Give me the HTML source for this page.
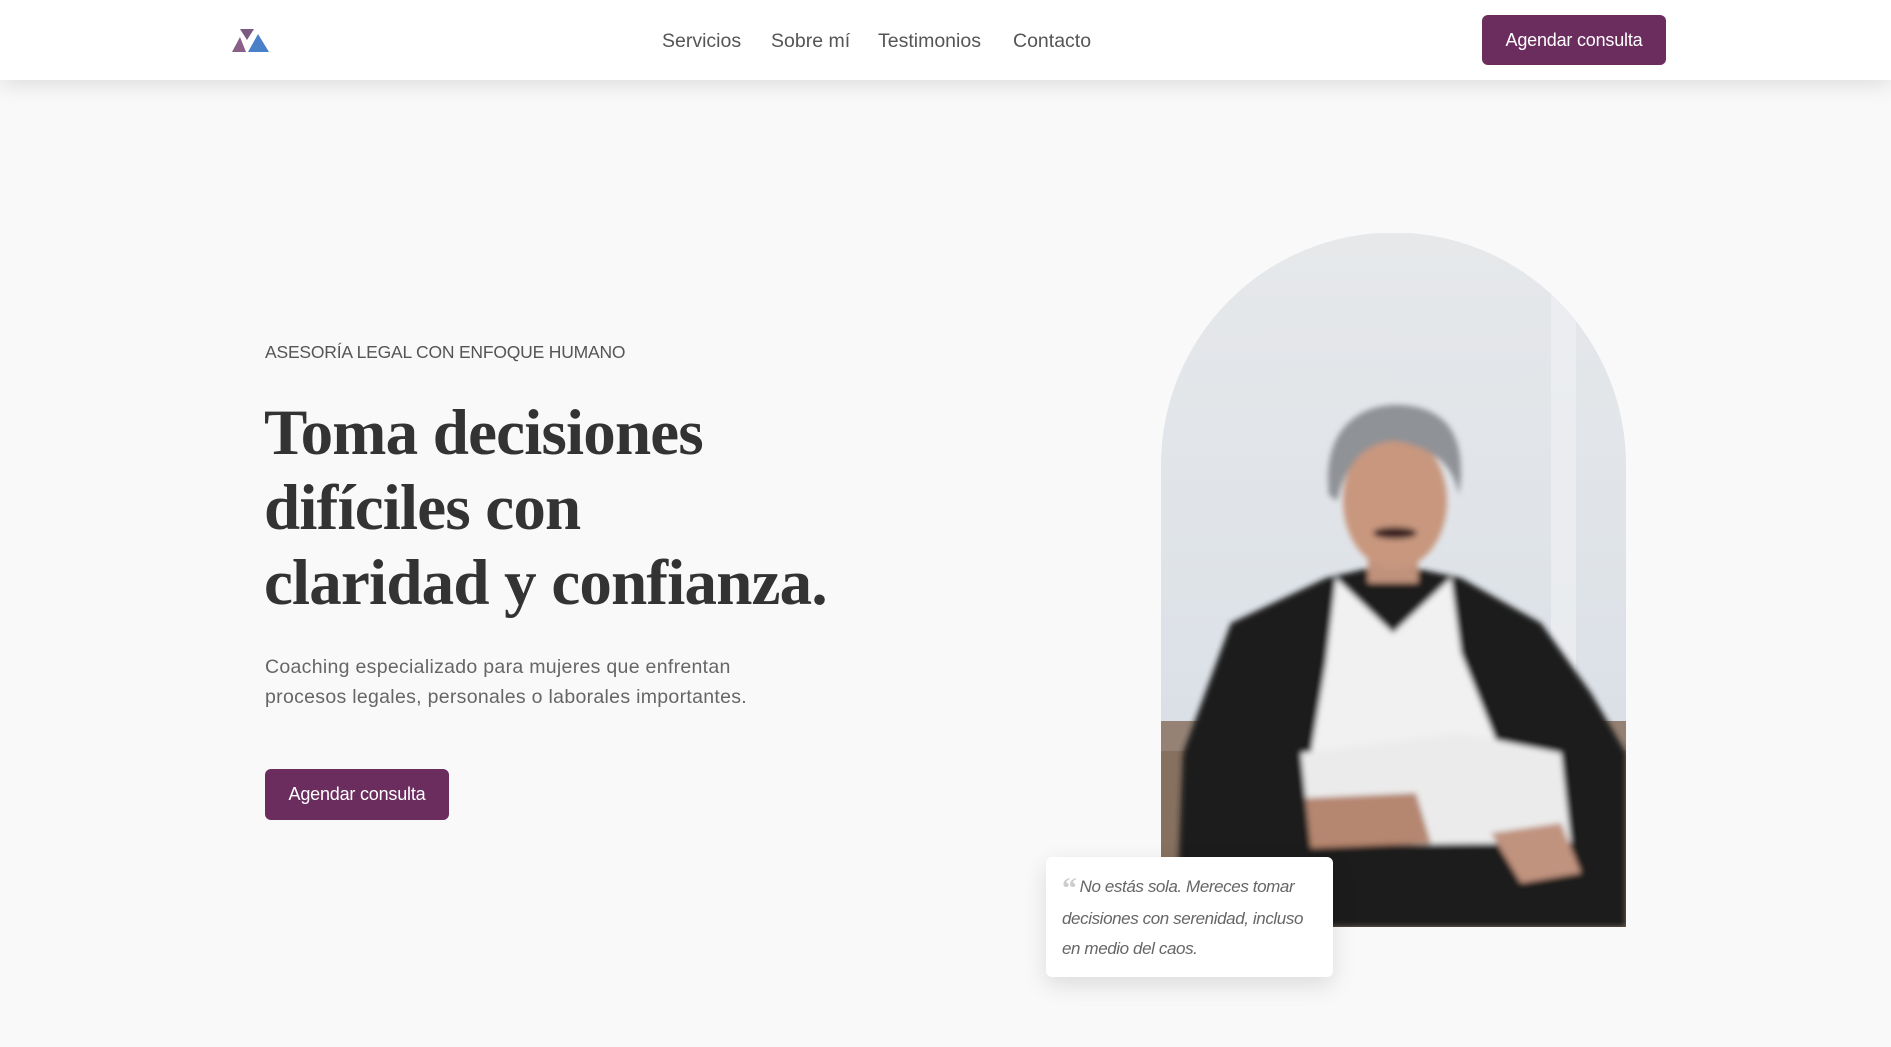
<!DOCTYPE html>
<html><head><meta charset="utf-8">
<style>
*{margin:0;padding:0;box-sizing:border-box}
body{width:1891px;height:1047px;overflow:hidden;background:#f9f9f9;font-family:"Liberation Sans",sans-serif;position:relative}
header{position:absolute;left:0;top:0;width:1891px;height:80px;background:#fff;box-shadow:0 4px 22px rgba(0,0,0,.12);z-index:5}
.nav{position:absolute;top:30px;font-size:19.5px;color:#555}
.btn{position:absolute;background:#6b2d5e;color:#fff;border-radius:6px;font-size:18px;display:flex;align-items:center;justify-content:center;letter-spacing:-0.2px}
.tag{position:absolute;left:265px;top:342px;font-size:17.5px;color:#555;letter-spacing:-0.2px}
h1{position:absolute;left:264px;top:396px;font-family:"Liberation Serif",serif;font-weight:bold;font-size:65px;line-height:75px;color:#333;letter-spacing:-0.8px}
.p{position:absolute;left:265px;top:652px;font-size:19.5px;line-height:30px;color:#666;letter-spacing:0.3px}
.quote{position:absolute;left:1046px;top:857px;width:287px;height:120px;background:#fff;border-radius:6px;box-shadow:0 8px 24px rgba(0,0,0,.12);padding:15px 14px 15px 16px;font-style:italic;font-size:17px;line-height:30px;color:#666;z-index:3;letter-spacing:-0.4px}
.quote b{font-style:normal;color:#ccc;font-family:"Liberation Serif",serif;font-size:30px;vertical-align:-6px;margin-right:3px}
</style></head><body>
<header>
<svg style="position:absolute;left:232px;top:29px" width="40" height="24" viewBox="0 0 40 24">
<polygon points="8,0 22,0 15,11" fill="#7a5a80"/>
<polygon points="0,23 14,23 8,8" fill="#8a5f88"/>
<polygon points="16,23 37,23 26,5" fill="#4a80c8"/>
</svg>
<div class="nav" style="left:662px">Servicios</div>
<div class="nav" style="left:771px">Sobre mí</div>
<div class="nav" style="left:878px">Testimonios</div>
<div class="nav" style="left:1013px">Contacto</div>
<div class="btn" style="left:1482px;top:15px;width:184px;height:50px">Agendar consulta</div>
</header>
<div class="tag">ASESORÍA LEGAL CON ENFOQUE HUMANO</div>
<h1>Toma decisiones<br>difíciles con<br>claridad y confianza.</h1>
<div class="p">Coaching especializado para mujeres que enfrentan<br>procesos legales, personales o laborales importantes.</div>
<div class="btn" style="left:265px;top:769px;width:184px;height:51px">Agendar consulta</div>
<svg style="position:absolute;left:1161px;top:233px" width="465" height="694" viewBox="0 0 465 694">
<defs>
<clipPath id="c"><path d="M0,232 A232.5,232.5 0 0 1 465,232 L465,694 L0,694Z"/></clipPath>
<linearGradient id="bg" x1="0" y1="0" x2="0" y2="1"><stop offset="0" stop-color="#e6e8ea"/><stop offset=".6" stop-color="#dde2e8"/><stop offset="1" stop-color="#d3dae2"/></linearGradient>
<filter id="bl"><feGaussianBlur stdDeviation="3"/></filter>
</defs>
<g clip-path="url(#c)">
<rect width="465" height="694" fill="url(#bg)"/>
<rect x="390" y="60" width="25" height="420" fill="#eef0f2" opacity=".7"/>
<rect x="0" y="488" width="465" height="206" fill="#86705f"/>
<rect x="0" y="488" width="465" height="30" fill="#a08d82" opacity=".6"/>
<g filter="url(#bl)">
<path d="M15,694 L22,520 L70,390 L165,345 L230,330 L300,345 L380,390 L430,460 L465,520 L465,694Z" fill="#1c1c1c"/>
<path d="M175,345 L232,400 L290,345 L300,420 L340,520 L400,540 L410,610 L160,610 L150,520 L165,430Z" fill="#f1f1f1"/>
<path d="M140,520 L300,500 L400,520 L410,610 L150,615Z" fill="#ebebeb"/>
<path d="M150,612 L410,610 L440,694 L140,694Z" fill="#1a1a1a"/>
<rect x="207" y="295" width="50" height="55" fill="#c0927c"/>
<ellipse cx="234" cy="268" rx="52" ry="68" fill="#c8977e"/>
<path d="M168,262 C160,190 205,170 240,172 C295,175 305,215 298,262 C290,220 255,212 235,208 C205,208 185,230 176,268Z" fill="#8f9296"/>
<ellipse cx="234" cy="300" rx="22" ry="6" fill="#3a2420"/>
<path d="M145,565 L255,560 L270,610 L150,615Z" fill="#b58670"/>
<path d="M330,600 L400,590 L420,640 L360,650Z" fill="#c0937e"/>
</g>
</g>
</svg>
<div class="quote"><b>“</b>No estás sola. Mereces tomar decisiones con serenidad, incluso en medio del caos.</div>
</body></html>
